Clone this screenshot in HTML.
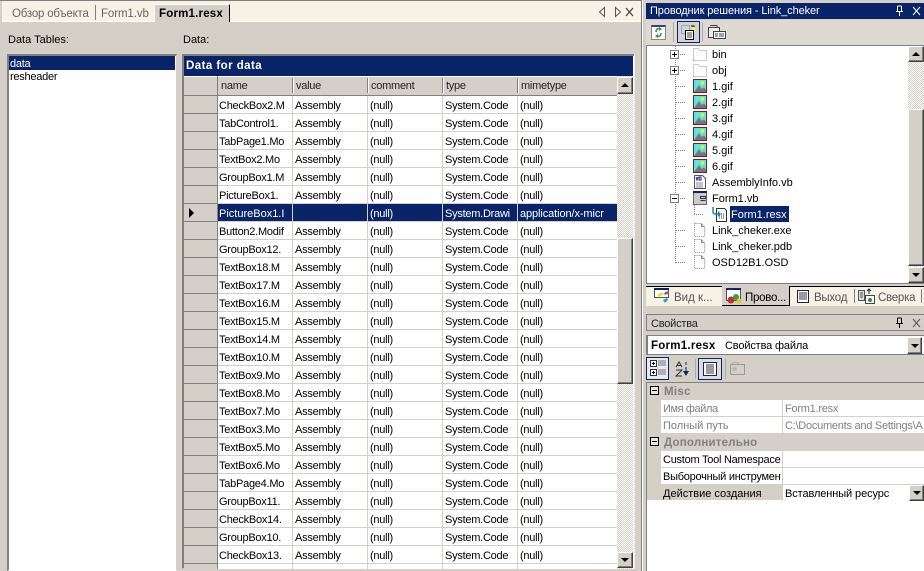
<!DOCTYPE html>
<html lang="ru"><head><meta charset="utf-8"><title>Form1.resx</title>
<style>
html,body{margin:0;padding:0}
body{width:924px;height:571px;overflow:hidden;position:relative;background:#d4d0c8;font:11px/14px "Liberation Sans",sans-serif;letter-spacing:-.25px;color:#000}
div,span,svg{position:absolute;box-sizing:border-box}
.t{white-space:nowrap;margin-top:1px}
.n{margin-top:0}
.z{letter-spacing:0}
.row{left:184px;width:433px;height:18px;background:linear-gradient(#fff 17px,#d4d0c8 17px);overflow:hidden}
.row .h{left:0;top:0;width:34px;height:18px;background:#d4d0c8;border-bottom:1px solid #808080;border-right:1px solid #808080}
.row span{top:3px;white-space:nowrap;overflow:hidden}
.row .a{left:35px;width:73px}.row .b{left:111px;width:72px}.row .c{left:186px;width:72px}.row .d{left:261px;width:72px}.row .e{left:336px;width:90px}
.row i{position:absolute;top:0;width:1px;height:18px;background:#d4d0c8}
.sel{background:#0a246a;color:#fff}
.hd{top:79px;white-space:nowrap;color:#222}
.sep{top:78px;width:1px;height:15px;background:#fff;box-shadow:-1px 0 0 #808080}
.btn{background:#d4d0c8;border:1px solid;border-color:#fff #404040 #404040 #fff;box-shadow:inset -1px -1px 0 #808080}
.dith{background:repeating-conic-gradient(#fff 0 25%,#d4d0c8 0 50%) 0 0/2px 2px}
.up{width:0;height:0;border:4px solid transparent;border-top:0;border-bottom:4px solid #000}
.dn{width:0;height:0;border:4px solid transparent;border-bottom:0;border-top:4px solid #000}
.tr{left:712px;white-space:nowrap;margin-top:1px;letter-spacing:0}
.ic{left:693px;width:14px;height:14px}
.dot-h{height:1px;background:repeating-linear-gradient(90deg,#808080 0 1px,transparent 1px 2px)}
.dot-v{width:1px;background:repeating-linear-gradient(180deg,#808080 0 1px,transparent 1px 2px)}
.pm{width:9px;height:9px;border:1px solid #808080;background:#fff}
.pg{color:#808080}
</style></head><body>
<svg width="0" height="0" style="left:0;top:0">
<defs>
<symbol id="gif" viewBox="0 0 14 14"><rect x=".5" y=".5" width="13" height="13" fill="#5ce4e4" stroke="#8b1a1a"/><path d="M1 13L6 6l3 4 2-2 2 3v2z" fill="#777"/><circle cx="9.5" cy="4" r="1.6" fill="#ff0"/></symbol>
<symbol id="fold" viewBox="0 0 14 14"><path d="M.5 13.5V1.500h5l1.500 2h6.500v10z" fill="#fff" stroke="#999" stroke-dasharray="1 1"/></symbol>
<symbol id="file" viewBox="0 0 14 14"><path d="M1.500.5h7l3 3v10h-10z" fill="#fff" stroke="#888" stroke-dasharray="1 1"/><path d="M8.500.5v3h3" fill="none" stroke="#888"/></symbol>
</defs></svg>

<!-- tab strip -->
<div style="left:0;top:0;width:641px;height:1px;background:#808080"></div>
<div style="left:2px;top:1px;width:639px;height:21px;background:#f6f2e6;border-bottom:1px solid #fff"></div>
<div class="t" style="left:12px;top:6px;color:#666;font-size:11.500px;letter-spacing:-.2px">Обзор объекта</div>
<div style="left:95px;top:5px;width:1px;height:15px;background:#808080"></div>
<div class="t" style="left:101px;top:6px;color:#666;font-size:11.500px;letter-spacing:-.1px">Form1.vb</div>
<div style="left:154px;top:4px;width:76px;height:18px;background:#d4d0c8;border-left:1px solid #fff;border-top:1px solid #fff;border-right:1px solid #000"></div>
<div class="t" style="left:159px;top:6px;font-weight:bold;font-size:11.500px;letter-spacing:.2px">Form1.resx</div>
<svg style="left:597px;top:6px" width="40" height="12" viewBox="0 0 40 12"><path d="M7.500 1.500L2.500 6l5 4.500zM18.500 1.500l5 4.500-5 4.500z" fill="none" stroke="#555"/><path d="M33 2l7 8M40 2l-7 8" stroke="#444" stroke-width="1.300" transform="translate(-4)"/></svg>

<div class="t z" style="left:8px;top:32px">Data Tables:</div>
<div class="t z" style="left:183px;top:32px">Data:</div>

<!-- list -->
<div style="left:7px;top:54px;width:170px;height:517px;background:#fff;border:2px solid #808080;border-right:1px solid #d4d0c8;border-bottom:1px solid #fff"></div>
<div style="left:9px;top:56px;width:166px;height:14px;background:#0a246a"></div>
<div class="t" style="left:10px;top:56px;color:#fff">data</div>
<div class="t" style="left:10px;top:69px">resheader</div>

<!-- grid frame -->
<div style="left:182px;top:54px;width:453px;height:515px;background:#fff;border:2px solid #808080;border-right:1px solid #f0eee8;border-bottom:1px solid #f0eee8"></div>
<div style="left:184px;top:56px;width:449px;height:20px;background:#0a246a"></div>
<div class="t n" style="left:186px;top:59px;color:#fff;font-weight:bold;letter-spacing:.45px;font-size:11.500px">Data for data</div>
<div style="left:184px;top:76px;width:433px;height:20px;background:#d4d0c8;border-bottom:1px solid #808080;border-top:1px solid #fff"></div>
<div style="left:217px;top:76px;width:1px;height:20px;background:#808080"></div>
<div class="hd" style="left:221px">name</div><div class="sep" style="left:293px"></div>
<div class="hd" style="left:296px">value</div><div class="sep" style="left:368px"></div>
<div class="hd" style="left:371px">comment</div><div class="sep" style="left:443px"></div>
<div class="hd" style="left:446px">type</div><div class="sep" style="left:518px"></div>
<div class="hd" style="left:521px">mimetype</div>

<div class="row" style="top:96px"><div class="h"></div><i style="left:108px"></i><i style="left:183px"></i><i style="left:258px"></i><i style="left:333px"></i><span class="a">CheckBox2.M</span><span class="b">Assembly</span><span class="c">(null)</span><span class="d">System.Code</span><span class="e">(null)</span></div>
<div class="row" style="top:114px"><div class="h"></div><i style="left:108px"></i><i style="left:183px"></i><i style="left:258px"></i><i style="left:333px"></i><span class="a">TabControl1.</span><span class="b">Assembly</span><span class="c">(null)</span><span class="d">System.Code</span><span class="e">(null)</span></div>
<div class="row" style="top:132px"><div class="h"></div><i style="left:108px"></i><i style="left:183px"></i><i style="left:258px"></i><i style="left:333px"></i><span class="a">TabPage1.Mo</span><span class="b">Assembly</span><span class="c">(null)</span><span class="d">System.Code</span><span class="e">(null)</span></div>
<div class="row" style="top:150px"><div class="h"></div><i style="left:108px"></i><i style="left:183px"></i><i style="left:258px"></i><i style="left:333px"></i><span class="a">TextBox2.Mo</span><span class="b">Assembly</span><span class="c">(null)</span><span class="d">System.Code</span><span class="e">(null)</span></div>
<div class="row" style="top:168px"><div class="h"></div><i style="left:108px"></i><i style="left:183px"></i><i style="left:258px"></i><i style="left:333px"></i><span class="a">GroupBox1.M</span><span class="b">Assembly</span><span class="c">(null)</span><span class="d">System.Code</span><span class="e">(null)</span></div>
<div class="row" style="top:186px"><div class="h"></div><i style="left:108px"></i><i style="left:183px"></i><i style="left:258px"></i><i style="left:333px"></i><span class="a">PictureBox1.</span><span class="b">Assembly</span><span class="c">(null)</span><span class="d">System.Code</span><span class="e">(null)</span></div>
<div class="row" style="top:204px"><div class="h"><div style="left:5px;top:4px;width:0;height:0;border:5px solid transparent;border-left:5px solid #000;border-right:0"></div></div><div class="sel" style="left:34px;top:0;width:399px;height:17px"></div><i style="left:108px"></i><i style="left:183px"></i><i style="left:258px"></i><i style="left:333px"></i><span class="a" style="color:#fff;letter-spacing:0">PictureBox1.I</span><span class="c" style="color:#fff">(null)</span><span class="d" style="color:#fff">System.Drawi</span><span class="e" style="color:#fff;letter-spacing:-.1px">application/x-micr</span></div>
<div class="row" style="top:222px"><div class="h"></div><i style="left:108px"></i><i style="left:183px"></i><i style="left:258px"></i><i style="left:333px"></i><span class="a">Button2.Modif</span><span class="b">Assembly</span><span class="c">(null)</span><span class="d">System.Code</span><span class="e">(null)</span></div>
<div class="row" style="top:240px"><div class="h"></div><i style="left:108px"></i><i style="left:183px"></i><i style="left:258px"></i><i style="left:333px"></i><span class="a">GroupBox12.</span><span class="b">Assembly</span><span class="c">(null)</span><span class="d">System.Code</span><span class="e">(null)</span></div>
<div class="row" style="top:258px"><div class="h"></div><i style="left:108px"></i><i style="left:183px"></i><i style="left:258px"></i><i style="left:333px"></i><span class="a">TextBox18.M</span><span class="b">Assembly</span><span class="c">(null)</span><span class="d">System.Code</span><span class="e">(null)</span></div>
<div class="row" style="top:276px"><div class="h"></div><i style="left:108px"></i><i style="left:183px"></i><i style="left:258px"></i><i style="left:333px"></i><span class="a">TextBox17.M</span><span class="b">Assembly</span><span class="c">(null)</span><span class="d">System.Code</span><span class="e">(null)</span></div>
<div class="row" style="top:294px"><div class="h"></div><i style="left:108px"></i><i style="left:183px"></i><i style="left:258px"></i><i style="left:333px"></i><span class="a">TextBox16.M</span><span class="b">Assembly</span><span class="c">(null)</span><span class="d">System.Code</span><span class="e">(null)</span></div>
<div class="row" style="top:312px"><div class="h"></div><i style="left:108px"></i><i style="left:183px"></i><i style="left:258px"></i><i style="left:333px"></i><span class="a">TextBox15.M</span><span class="b">Assembly</span><span class="c">(null)</span><span class="d">System.Code</span><span class="e">(null)</span></div>
<div class="row" style="top:330px"><div class="h"></div><i style="left:108px"></i><i style="left:183px"></i><i style="left:258px"></i><i style="left:333px"></i><span class="a">TextBox14.M</span><span class="b">Assembly</span><span class="c">(null)</span><span class="d">System.Code</span><span class="e">(null)</span></div>
<div class="row" style="top:348px"><div class="h"></div><i style="left:108px"></i><i style="left:183px"></i><i style="left:258px"></i><i style="left:333px"></i><span class="a">TextBox10.M</span><span class="b">Assembly</span><span class="c">(null)</span><span class="d">System.Code</span><span class="e">(null)</span></div>
<div class="row" style="top:366px"><div class="h"></div><i style="left:108px"></i><i style="left:183px"></i><i style="left:258px"></i><i style="left:333px"></i><span class="a">TextBox9.Mo</span><span class="b">Assembly</span><span class="c">(null)</span><span class="d">System.Code</span><span class="e">(null)</span></div>
<div class="row" style="top:384px"><div class="h"></div><i style="left:108px"></i><i style="left:183px"></i><i style="left:258px"></i><i style="left:333px"></i><span class="a">TextBox8.Mo</span><span class="b">Assembly</span><span class="c">(null)</span><span class="d">System.Code</span><span class="e">(null)</span></div>
<div class="row" style="top:402px"><div class="h"></div><i style="left:108px"></i><i style="left:183px"></i><i style="left:258px"></i><i style="left:333px"></i><span class="a">TextBox7.Mo</span><span class="b">Assembly</span><span class="c">(null)</span><span class="d">System.Code</span><span class="e">(null)</span></div>
<div class="row" style="top:420px"><div class="h"></div><i style="left:108px"></i><i style="left:183px"></i><i style="left:258px"></i><i style="left:333px"></i><span class="a">TextBox3.Mo</span><span class="b">Assembly</span><span class="c">(null)</span><span class="d">System.Code</span><span class="e">(null)</span></div>
<div class="row" style="top:438px"><div class="h"></div><i style="left:108px"></i><i style="left:183px"></i><i style="left:258px"></i><i style="left:333px"></i><span class="a">TextBox5.Mo</span><span class="b">Assembly</span><span class="c">(null)</span><span class="d">System.Code</span><span class="e">(null)</span></div>
<div class="row" style="top:456px"><div class="h"></div><i style="left:108px"></i><i style="left:183px"></i><i style="left:258px"></i><i style="left:333px"></i><span class="a">TextBox6.Mo</span><span class="b">Assembly</span><span class="c">(null)</span><span class="d">System.Code</span><span class="e">(null)</span></div>
<div class="row" style="top:474px"><div class="h"></div><i style="left:108px"></i><i style="left:183px"></i><i style="left:258px"></i><i style="left:333px"></i><span class="a">TabPage4.Mo</span><span class="b">Assembly</span><span class="c">(null)</span><span class="d">System.Code</span><span class="e">(null)</span></div>
<div class="row" style="top:492px"><div class="h"></div><i style="left:108px"></i><i style="left:183px"></i><i style="left:258px"></i><i style="left:333px"></i><span class="a">GroupBox11.</span><span class="b">Assembly</span><span class="c">(null)</span><span class="d">System.Code</span><span class="e">(null)</span></div>
<div class="row" style="top:510px"><div class="h"></div><i style="left:108px"></i><i style="left:183px"></i><i style="left:258px"></i><i style="left:333px"></i><span class="a">CheckBox14.</span><span class="b">Assembly</span><span class="c">(null)</span><span class="d">System.Code</span><span class="e">(null)</span></div>
<div class="row" style="top:528px"><div class="h"></div><i style="left:108px"></i><i style="left:183px"></i><i style="left:258px"></i><i style="left:333px"></i><span class="a">GroupBox10.</span><span class="b">Assembly</span><span class="c">(null)</span><span class="d">System.Code</span><span class="e">(null)</span></div>
<div class="row" style="top:546px"><div class="h"></div><i style="left:108px"></i><i style="left:183px"></i><i style="left:258px"></i><i style="left:333px"></i><span class="a">CheckBox13.</span><span class="b">Assembly</span><span class="c">(null)</span><span class="d">System.Code</span><span class="e">(null)</span></div>
<div class="row" style="top:564px;height:5px"><div class="h"></div><i style="left:108px"></i><i style="left:183px"></i><i style="left:258px"></i><i style="left:333px"></i><span class="a">CheckBox12.</span><span class="b">Assembly</span><span class="c">(null)</span><span class="d">System.Code</span><span class="e">(null)</span></div>
<!-- grid scroll -->
<div class="dith" style="left:617px;top:76px;width:16px;height:493px"></div>
<div class="btn" style="left:617px;top:77px;width:16px;height:17px"><div class="up" style="left:3px;top:5px"></div></div>
<div class="btn" style="left:617px;top:238px;width:16px;height:146px"></div>
<div class="btn" style="left:617px;top:552px;width:16px;height:16px"><div class="dn" style="left:3px;top:5px"></div></div>
<div style="left:634px;top:54px;width:1px;height:515px;background:#f0eee8"></div>
<div style="left:641px;top:0;width:1px;height:571px;background:#808080"></div>
<div style="left:642px;top:0;width:1px;height:571px;background:#fff"></div>

<!-- solution explorer -->
<div style="left:646px;top:3px;width:278px;height:16px;background:#0a246a"></div>
<div class="t n" style="left:650px;top:4px;color:#fff;letter-spacing:-.1px">Проводник решения - Link_cheker</div>
<svg style="left:895px;top:5px" width="29" height="12" viewBox="0 0 29 12"><path d="M2.500 1v5M6.500 1v5M1 6.500h7M4.500 7v4M2.500 1h4" stroke="#fff" fill="none"/><path d="M18 2l7 8M25 2l-7 8" stroke="#fff"/></svg>
<div style="left:646px;top:20px;width:278px;height:25px;background:#dedad2"></div>
<div style="left:651px;top:25px;width:15px;height:15px;background:#fff;border:1px solid #888;border-top:2px solid #3a3a9a"></div>
<svg style="left:651px;top:25px" width="15" height="15" viewBox="0 0 15 15"><path d="M5 7c0-3 2-4 4-3M10 8c0 3-2 4-4 3" fill="none" stroke="#2a9a3a" stroke-width="1.500"/><path d="M8 2l3 2-3 2zM7 9l-3 2 3 2z" fill="#2a9a3a"/></svg>
<div style="left:673px;top:22px;width:1px;height:20px;background:#aaa"></div>
<div style="left:677px;top:21px;width:23px;height:22px;background:#d0d2dc;border:1px solid #0a246a"></div>
<svg style="left:680px;top:24px" width="17" height="16" viewBox="0 0 17 16"><rect x="1.500" y="1.500" width="8" height="8" fill="none" stroke="#777" stroke-dasharray="1 1"/><path d="M11 2h3v7" fill="none" stroke="#000"/><path d="M12 3h3v6h-2z" fill="#ff0"/><rect x="5.500" y="6.500" width="8" height="9" fill="#fff" stroke="#000"/><path d="M7 9h5M7 11h5M7 13h5" stroke="#444"/></svg>
<div style="left:702px;top:22px;width:1px;height:20px;background:#aaa"></div>
<svg style="left:708px;top:24px" width="18" height="16" viewBox="0 0 18 16"><rect x=".5" y="3.500" width="11" height="10" fill="#eee" stroke="#444"/><path d="M2 1.500h7v2" fill="none" stroke="#444"/><rect x="5.500" y="7.500" width="12" height="7" fill="#fff" stroke="#444"/><path d="M7 10h3M11 10h5M7 12h3M11 12h5" stroke="#3a3a9a"/></svg>

<div style="left:646px;top:45px;width:278px;height:239px;background:#fff;border:1px solid #808080;border-width:1px 0 1px 1px"></div>
<div class="dot-v" style="left:675px;top:46px;height:217px"></div>
<div class="pm" style="left:670px;top:50px"><div style="left:1px;top:3px;width:5px;height:1px;background:#000"></div><div style="left:3px;top:1px;width:1px;height:5px;background:#000"></div></div>
<div class="pm" style="left:670px;top:66px"><div style="left:1px;top:3px;width:5px;height:1px;background:#000"></div><div style="left:3px;top:1px;width:1px;height:5px;background:#000"></div></div>
<div class="dot-h" style="left:680px;top:54px;width:6px"></div>
<div class="dot-h" style="left:680px;top:70px;width:6px"></div>
<div class="dot-h" style="left:676px;top:86px;width:10px"></div>
<div class="dot-h" style="left:676px;top:102px;width:10px"></div>
<div class="dot-h" style="left:676px;top:118px;width:10px"></div>
<div class="dot-h" style="left:676px;top:134px;width:10px"></div>
<div class="dot-h" style="left:676px;top:150px;width:10px"></div>
<div class="dot-h" style="left:676px;top:166px;width:10px"></div>
<div class="dot-h" style="left:676px;top:182px;width:10px"></div>
<div class="dot-h" style="left:680px;top:198px;width:6px"></div>
<div class="dot-h" style="left:676px;top:230px;width:10px"></div>
<div class="dot-h" style="left:676px;top:246px;width:10px"></div>
<div class="dot-h" style="left:676px;top:262px;width:10px"></div>
<div class="dot-v" style="left:694px;top:205px;height:10px"></div>
<div class="dot-h" style="left:694px;top:214px;width:10px"></div>
<svg class="ic" style="top:47px"><use href="#fold"/></svg><div class="tr" style="top:47px">bin</div>
<svg class="ic" style="top:63px"><use href="#fold"/></svg><div class="tr" style="top:63px">obj</div>
<svg class="ic" style="top:79px"><use href="#gif"/></svg><div class="tr" style="top:79px">1.gif</div>
<svg class="ic" style="top:95px"><use href="#gif"/></svg><div class="tr" style="top:95px">2.gif</div>
<svg class="ic" style="top:111px"><use href="#gif"/></svg><div class="tr" style="top:111px">3.gif</div>
<svg class="ic" style="top:127px"><use href="#gif"/></svg><div class="tr" style="top:127px">4.gif</div>
<svg class="ic" style="top:143px"><use href="#gif"/></svg><div class="tr" style="top:143px">5.gif</div>
<svg class="ic" style="top:159px"><use href="#gif"/></svg><div class="tr" style="top:159px">6.gif</div>
<svg class="ic" style="top:175px" viewBox="0 0 14 14"><path d="M1.500.5h8l3 3v10h-11z" fill="#fff" stroke="#555"/><path d="M3 2l1 3 1-3M6 2v3h2v-3z" fill="none" stroke="#1a1aaa"/><path d="M3 8h7M3 10h7M3 12h7" stroke="#888"/></svg><div class="tr" style="top:175px">AssemblyInfo.vb</div>
<div class="pm" style="left:670px;top:194px"><div style="left:1px;top:3px;width:5px;height:1px;background:#000"></div></div>
<svg class="ic" style="top:191px" viewBox="0 0 14 14"><rect x=".5" y=".5" width="13" height="13" fill="#ccc" stroke="#666"/><rect x="0" y="0" width="14" height="2" fill="#0a246a"/><path d="M7.500 5.500h5v2h-5zM7.500 9.500h5" fill="none" stroke="#333"/></svg><div class="tr" style="top:191px">Form1.vb</div>
<svg style="left:712px;top:206px" width="16" height="16" viewBox="0 0 16 16"><path d="M4.500 2.500h8l2 2v11h-10z" fill="#fff" stroke="#333"/><path d="M7 8h6M7 10h6M7 12h6" stroke="#3a3a9a" stroke-dasharray="1 1"/><path d="M1 1v5c0 2 2 2 5 2" fill="none" stroke="#1a8aaa" stroke-width="1.500"/><path d="M6 5l3 3-3 3z" fill="#1a8aaa"/></svg>
<div style="left:730px;top:206px;width:59px;height:16px;background:#0a246a"></div>
<div class="tr" style="left:731px;top:207px;color:#fff">Form1.resx</div>
<svg class="ic" style="top:223px"><use href="#file"/></svg><div class="tr" style="top:223px">Link_cheker.exe</div>
<svg class="ic" style="top:239px"><use href="#file"/></svg><div class="tr" style="top:239px">Link_cheker.pdb</div>
<svg class="ic" style="top:255px"><use href="#file"/></svg><div class="tr" style="top:255px">OSD12B1.OSD</div>
<div class="dith" style="left:908px;top:46px;width:16px;height:237px"></div>
<div class="btn" style="left:908px;top:46px;width:16px;height:16px"><div class="up" style="left:3px;top:5px"></div></div>
<div class="btn" style="left:908px;top:109px;width:16px;height:157px"></div>
<div class="btn" style="left:908px;top:267px;width:16px;height:16px"><div class="dn" style="left:3px;top:5px"></div></div>

<!-- bottom tabs -->
<div style="left:646px;top:286px;width:278px;height:20px;background:#f6f2e6"></div>
<div style="left:646px;top:286px;width:76px;height:1px;background:#000"></div>
<div style="left:722px;top:286px;width:68px;height:20px;background:#d4d0c8;border-right:1px solid #000;border-bottom:1px solid #000"></div>
<div style="left:790px;top:286px;width:134px;height:1px;background:#000"></div>
<svg style="left:654px;top:288px" width="16" height="16" viewBox="0 0 16 16"><rect x=".5" y=".5" width="14" height="9" fill="#fff" stroke="#555"/><rect x="0" y="0" width="15" height="2" fill="#0a246a"/><path d="M3 7l5-3 2 2-5 3z" fill="#e8e030"/><path d="M10 5l4-2 1 2-4 2z" fill="#c030a0"/><path d="M9 12l4-2 1 2-3 3z" fill="#30a0c0"/></svg>
<div class="t" style="left:674px;top:290px;color:#555;font-size:11.500px;letter-spacing:0">Вид к...</div>
<svg style="left:726px;top:288px" width="16" height="16" viewBox="0 0 16 16"><rect x=".5" y=".5" width="14" height="12" fill="#fff" stroke="#555"/><rect x="0" y="0" width="15" height="2" fill="#0a246a"/><circle cx="5" cy="12" r="3.500" fill="#c03030"/><circle cx="10" cy="9" r="3" fill="#3aa03a"/><circle cx="13" cy="13" r="2.500" fill="#e8c030"/></svg>
<div class="t" style="left:745px;top:290px;font-size:11.500px">Прово...</div>
<svg style="left:797px;top:290px" width="13" height="13" viewBox="0 0 13 13"><rect x=".5" y=".5" width="11" height="12" fill="#fff" stroke="#223"/><path d="M2 3h8M2 5h8M2 7h8M2 9h8" stroke="#334"/></svg>
<div class="t" style="left:814px;top:290px;color:#555;font-size:11.500px">Выход</div>
<div style="left:854px;top:289px;width:1px;height:14px;background:#808080"></div>
<svg style="left:858px;top:288px" width="17" height="16" viewBox="0 0 17 16"><rect x=".5" y="2.500" width="6" height="10" fill="#ddd" stroke="#555"/><path d="M2 5h3M2 7h3M2 9h3" stroke="#555"/><path d="M11 6V2M9 3l2-2 2 2" fill="none" stroke="#224"/><rect x="7.500" y="7.500" width="9" height="8" fill="#fff" stroke="#445"/><circle cx="12" cy="12" r="2" fill="#3a8a3a"/></svg>
<div class="t" style="left:878px;top:290px;color:#555;font-size:11.500px">Сверка</div>
<div style="left:921px;top:289px;width:1px;height:14px;background:#808080"></div>

<!-- properties -->
<div style="left:646px;top:314px;width:278px;height:17px;background:#d4d0c8;border:1px solid #808080;border-right:0"></div>
<div class="t" style="left:651px;top:316px;color:#222;letter-spacing:-.2px">Свойства</div>
<svg style="left:895px;top:317px" width="29" height="12" viewBox="0 0 29 12"><path d="M2.500 1v5M6.500 1v5M1 6.500h7M4.500 7v4M2.500 1h4" stroke="#000" fill="none"/><path d="M18 2l7 8M25 2l-7 8" stroke="#555"/></svg>
<div style="left:646px;top:335px;width:278px;height:20px;background:#fff;border:1px solid #808080;border-right:0;border-left:2px solid #808080"></div>
<div class="t" style="left:651px;top:338px;font-weight:bold;font-size:11.500px;letter-spacing:.25px">Form1.resx</div>
<div class="t" style="left:725px;top:338px;letter-spacing:-.15px">Свойства файла</div>
<div class="btn" style="left:907px;top:337px;width:15px;height:17px"><div class="dn" style="left:3px;top:6px"></div></div>
<!-- props toolbar -->
<div style="left:646px;top:357px;width:23px;height:23px;background:#e8e8ee;border:1px solid #0a246a"></div>
<svg style="left:650px;top:360px" width="17" height="17" viewBox="0 0 17 17"><rect x=".5" y=".5" width="6" height="6" fill="#fff" stroke="#333"/><rect x=".5" y="9.500" width="6" height="6" fill="#fff" stroke="#333"/><path d="M2 3.500h3M3.500 2v3M2 12.500h3M3.500 11v3" stroke="#000"/><path d="M8 1h8M8 3h8M8 5h8M8 10h8M8 12h8M8 14h8" stroke="#777"/></svg>
<svg style="left:675px;top:361px" width="17" height="16" viewBox="0 0 17 16"><path d="M1 6l3-5 3 5M2 4.500h4M1 9h6L1 15h6" fill="none" stroke="#333"/><path d="M11 1v3M11 6v5" stroke="#0a246a"/><path d="M8 10h6l-3 5z" fill="#0a246a"/></svg>
<div style="left:695px;top:359px;width:1px;height:20px;background:#aaa"></div>
<div style="left:698px;top:358px;width:24px;height:22px;background:#dcdce4;border:1px solid #0a246a"></div>
<svg style="left:703px;top:362px" width="14" height="14" viewBox="0 0 14 14"><rect x=".5" y=".5" width="13" height="13" fill="#fff" stroke="#223"/><path d="M3 3h8M3 5h8M3 7h8M3 9h8M3 11h8" stroke="#334"/></svg>
<div style="left:725px;top:359px;width:1px;height:20px;background:#aaa"></div>
<svg style="left:730px;top:362px" width="16" height="14" viewBox="0 0 16 14"><rect x=".5" y="2.500" width="14" height="10" fill="none" stroke="#999"/><path d="M3 2V.5h5V2M3 6h3v2H3z" fill="none" stroke="#aaa"/></svg>

<!-- property grid -->
<div style="left:646px;top:382px;width:278px;height:189px;background:#fff;border-top:1px solid #808080;border-left:1px solid #808080"></div>
<div style="left:647px;top:383px;width:277px;height:117px;background:#d4d0c8"></div>
<div class="pm" style="left:650px;top:386px;border-color:#000;background:#e8e6e0;width:9px;height:9px"><div style="left:1px;top:3px;width:5px;height:1px;background:#000"></div></div>
<div class="t pg" style="left:664px;top:384px;font-weight:bold;font-size:11.500px;letter-spacing:.3px">Misc</div>
<div style="left:661px;top:400px;width:263px;height:16px;background:#fff"></div>
<div style="left:661px;top:417px;width:263px;height:16px;background:#fff"></div>
<div style="left:782px;top:400px;width:1px;height:33px;background:#d4d0c8"></div>
<div class="t pg" style="left:663px;top:401px;letter-spacing:-.4px">Имя файла</div>
<div class="t pg" style="left:785px;top:401px">Form1.resx</div>
<div class="t pg z" style="left:663px;top:418px">Полный путь</div>
<div class="t pg" style="left:785px;top:418px;width:139px;overflow:hidden">C:\Documents and Settings\A</div>
<div class="pm" style="left:650px;top:437px;border-color:#000;background:#e8e6e0"><div style="left:1px;top:3px;width:5px;height:1px;background:#000"></div></div>
<div class="t pg" style="left:664px;top:435px;font-weight:bold;font-size:11.500px;letter-spacing:.2px">Дополнительно</div>
<div style="left:661px;top:451px;width:263px;height:16px;background:#fff"></div>
<div style="left:661px;top:468px;width:263px;height:16px;background:#fff"></div>
<div style="left:783px;top:485px;width:141px;height:16px;background:#fff"></div>
<div style="left:782px;top:451px;width:1px;height:50px;background:#d4d0c8"></div>
<div class="t" style="left:663px;top:452px;width:118px;overflow:hidden">Custom Tool Namespace</div>
<div class="t" style="left:663px;top:469px;width:118px;overflow:hidden">Выборочный инструмент</div>
<div class="t z" style="left:663px;top:486px">Действие создания</div>
<div class="t" style="left:785px;top:486px;letter-spacing:-.1px">Вставленный ресурс</div>
<div class="btn" style="left:909px;top:485px;width:15px;height:16px"><div class="dn" style="left:3px;top:5px"></div></div>
</body></html>
